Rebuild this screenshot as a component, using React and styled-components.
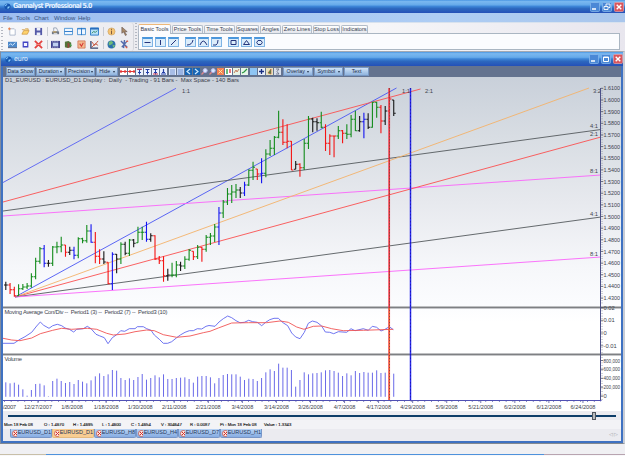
import styled, { createGlobalStyle } from 'styled-components'

const GlobalStyle = createGlobalStyle`
	* { box-sizing: border-box; }
	body {
		margin: 0;
		font-family: 'Liberation Sans', Arial, sans-serif;
		font-size: 6px;
		color: #30343c;
	}
`

const Screen = styled.div`
	width: 625px;
	height: 456px;
	display: flex;
	flex-direction: column;
	background: #ececf0;
	overflow: hidden;
	white-space: nowrap;
	user-select: none;
`

const TitleBar = styled.div`
	height: ${p => p.$h}px;
	flex: none;
	display: flex;
	align-items: center;
	gap: 2px;
	padding: 0 ${p => p.$right}px 0 4px;
	background: linear-gradient(#4a96e2 0, #7ab8f0 12%, #66aaea 38%, #3f88da 48%, #2d68be 66%, #2450b8 100%);
`

const TitleText = styled.span`
	flex: 1;
	color: #e6f2ff;
	font-family: 'DejaVu Sans Condensed', 'DejaVu Sans', sans-serif;
	font-stretch: condensed;
	font-size: ${p => p.$size}px;
	font-weight: ${p => (p.$bold ? 'bold' : 'normal')};
	letter-spacing: ${p => p.$track || 0}px;
	line-height: 1;
`

const MenuBar = styled.div`
	height: 10px;
	flex: none;
	display: flex;
	align-items: center;
	padding-left: 3px;
	border-bottom: 1px solid #d8e2ee;
	background: linear-gradient(90deg, #9dbdf0, #aecdf4 70%, #a9c6ec);
	color: #34507c;
`

const MenuItem = styled.span`
	width: ${p => p.$w}px;
`

const ToolArea = styled.div`
	height: 28px;
	flex: none;
	display: flex;
	background: linear-gradient(90deg, #f7f7f9, #ececf0 20%, #f6f6f8 60%, #e8e6ee);
`

const IconBars = styled.div`
	width: 134px;
	display: flex;
	flex-direction: column;
	padding: 2px 0 0 1px;
	border-right: 1px solid #d4d6dc;
	border-radius: 0 3px 3px 0;
`

const IconBar = styled.div`
	height: 13px;
	display: flex;
	align-items: center;
	gap: 4px;
`

const Grip = styled.div`
	width: 2px;
	height: ${p => p.$h}px;
	margin: 0 1px 0 ${p => p.$left || 0}px;
	background: repeating-linear-gradient(#b4b8c2 0 1px, transparent 1px 3px);
`

const Divider = styled.div`
	width: 1px;
	height: 9px;
	margin: 0 -0.5px;
	background: #c6cad2;
`

const ToolPanel = styled.div`
	flex: 1;
	display: flex;
	flex-direction: column;
	margin: 1px 5px 1px 0;
`

const TabStrip = styled.div`
	height: 9px;
	display: flex;
	align-items: flex-end;
	gap: 1px;
`

const ToolTab = styled.div`
	width: ${p => p.$w}px;
	height: ${p => (p.$active ? 10 : 8)}px;
	margin-bottom: ${p => (p.$active ? -1 : 0)}px;
	z-index: ${p => (p.$active ? 1 : 0)};
	flex: none;
	display: flex;
	align-items: center;
	justify-content: center;
	border: 1px solid #b3bcc8;
	border-bottom: 0;
	border-top-color: ${p => (p.$active ? '#eeb878' : '#b3bcc8')};
	border-radius: 2px 2px 0 0;
	background: ${p => (p.$active ? '#fcfcfe' : 'linear-gradient(#fff, #e4e6ec)')};
	color: #384252;
	font-size: 5.6px;
	line-height: 1;
`

const ToolRow = styled.div`
	flex: 1;
	display: flex;
	align-items: center;
	gap: 2px;
	padding-left: 3px;
	border: 1px solid #aab6c2;
	background: #fbfcfe;
`

const ToolButton = styled.div`
	width: 11px;
	height: 10px;
	margin-left: ${p => (p.$group ? 4 : 0)}px;
	border: 1px solid #7fb4e4;
	border-top: 2px solid #4b97dc;
	background: #dcedfb;
	display: flex;
`

const Child = styled.div`
	height: 393px;
	flex: none;
	display: flex;
	flex-direction: column;
	border-left: 1px solid #7f8ba0;
	border-right: 2px solid #c8cdd6;
	border-top: 1px solid #a2a8b2;
	border-bottom: 1px solid #838990;
`

const ChildBody = styled.div`
	flex: 1;
	display: flex;
	flex-direction: column;
	border: solid #3f72c2;
	border-width: 0 2px 2px;
	background: #ebebf0;
`

const ChartTools = styled.div`
	height: 11px;
	flex: none;
	display: flex;
	align-items: center;
	gap: 1px;
	padding-left: 3px;
	background: #64738f;
`

const ChartButton = styled.div`
	width: ${p => p.$w}px;
	height: 9px;
	flex: none;
	display: flex;
	align-items: center;
	justify-content: space-evenly;
	background: linear-gradient(#cfe2f6, #8fb4df);
	border: 1px solid #7898c4;
	color: #1c2c48;
	font-size: 5.3px;
	line-height: 1;
`

const Arrow = styled.i`
	border: 1.5px solid transparent;
	border-top: 2px solid #24344e;
	border-bottom: 0;
`

const MiniTools = styled.div`
	width: 163px;
	display: flex;
	align-items: center;
	justify-content: space-between;
	padding: 0 1px;
`

const ChartArea = styled.div`
	height: 334px;
	flex: none;
	display: flex;
	flex-direction: column;
	background: linear-gradient(#c9d0da 0, #d8dde3 60px, #e7e9ee 125px, #f6f7fa 190px, #fbfcfe 227px, #fff 245px, #fff 100%);
`

const InfoLine = styled.div`
	height: 10px;
	padding: 0 0 0 2px;
	line-height: 7px;
	font-size: 5.9px;
	color: #3c404a;
`

const Plot = styled.svg`
	flex: none;
	overflow: visible;
`

const Slider = styled.div`
	height: 9px;
	flex: none;
	display: flex;
	align-items: center;
	padding: 0 5px;
`

const Track = styled.div`
	flex: ${p => p.$grow};
	height: 2px;
	background: #0c3c68;
`

const Thumb = styled.div`
	width: 4px;
	height: 8px;
	background: #b7bbc0;
	border: 1px solid #50565e;
`

const Readout = styled.div`
	height: 9px;
	flex: none;
	display: flex;
	align-items: center;
	padding-left: 1px;
	font-size: 4.3px;
	color: #101010;
	background: #f3f3f6;
	-webkit-text-stroke: 0.12px #101010;
`

const ReadCell = styled.span`
	width: ${p => p.$w}px;
	flex: none;
`

const WindowTabs = styled.div`
	flex: 1;
	display: flex;
	align-items: flex-start;
	padding: 0 3px 0 7px;
`

const WindowTab = styled.div`
	width: 42px;
	height: 9px;
	display: flex;
	align-items: center;
	gap: 1px;
	padding-left: 1px;
	background: ${p => (p.$active ? '#f8cd92' : 'linear-gradient(#b8d3f5, #86ace2)')};
	border: 1px solid ${p => (p.$active ? '#e4ba80' : '#7896c8')};
	border-top: 0;
	border-radius: 0 0 2px 2px;
	color: #26375a;
	font-size: 5.5px;
	line-height: 1;
`

const Scrollers = styled.span`
	margin-left: auto;
	font-size: 5px;
	line-height: 10px;
	color: #9a9aa4;
`

const Footer = styled.div`
	flex: 1;
	display: flex;
	align-items: flex-end;
	background: #f0f0f3;
`

const FooterLine = styled.div`
	width: ${p => p.$w}px;
	height: 2px;
	background: ${p => p.$c};
	border-bottom: 1px solid #f8f8fa;
`

const Caption = ({ kind }) => (
	<svg width="10" height="10" viewBox="0 0 10 10" fill="none" stroke="#fff">
		<rect x=".5" y=".5" width="9" height="9" rx="1" fill={kind === 'close' ? '#d9565c' : '#4b88d6'} stroke={kind === 'close' ? '#e8a0a8' : '#8cbcee'} strokeWidth=".7" />
		{kind === 'min' && <path d="M2 7h4" strokeWidth="1.5" />}
		{kind === 'max' && <path d="M2.5 3h5v4.5h-5zM2.5 3.5h5" />}
		{kind === 'restore' && <path d="M4 4V2h4v3.5H6.5M2 4.5h4v3H2z" strokeWidth=".9" />}
		{kind === 'close' && <path d="M2.7 2.7l4.6 4.6m0-4.6L2.7 7.3" strokeWidth="1.4" />}
	</svg>
)

const Globe = ({ size }) => (
	<svg width={size} height={size} viewBox="0 0 8 8">
		<circle cx="4" cy="4" r="3.5" fill="#1556b0" />
		<path d="M1 4Q1 1 4 1Q3 3 1 4M4 4.3L6.6 3.6Q6.4 6.6 4 6.8z" fill="#8bd0ff" />
	</svg>
)

const glyphs = {
	new: <><path d="M2 2h5l1 1v6H2z" fill="#fff" stroke="#8a9ab8" strokeWidth=".7" /><path d="M0 2h3M1.5.5v3" stroke="#e87840" /></>,
	open: <><path d="M1 3h3l1-1h3v2" fill="#f6dc98" stroke="#cb9440" strokeWidth=".8" /><path d="M1 8l2-4h6L7 8z" fill="#ffd36b" stroke="#cb9440" strokeWidth=".8" /></>,
	save: <><path d="M1 1h8v8H1z" fill="#5359a7" /><path d="M3 1h4v3H3zM3 6h4v3H3z" fill="#edf0fa" /></>,
	print: <><path d="M3 1h3l2 4H3z" fill="#f4f6fa" stroke="#72829a" strokeWidth=".7" /><path d="M1 5h8v3H1z" fill="#6d7888" /><path d="M2 5.5h4" stroke="#e4b04c" /><path d="M3 7.5h4" stroke="#fff" /></>,
	tileH: <><path d="M.5 1.5h9v7h-9z" fill="#eef6ff" stroke="#4a92d4" /><path d="M.5 5h9" stroke="#2474c6" /></>,
	tileV: <><path d="M.5 1.5h9v7h-9z" fill="#eef6ff" stroke="#4a92d4" /><path d="M5 1v8M.5 2h9" stroke="#2474c6" /></>,
	cascade: <><path d="M.5 1h9v8h-9z" fill="#b6e0f7" stroke="#2474c6" /><path d="M.5 2h9" stroke="#1d62b6" strokeWidth="1.5" /><path d="M2 7l2-2 2 1 2-2" fill="none" stroke="#2c8460" /></>,
	info: <><circle cx="5" cy="5" r="4" fill="#f6c473" stroke="#c49a5b" strokeWidth=".6" /><path d="M5 4v4M5 2v1.2" stroke="#735035" /></>,
	pointer: <path d="M2 0v7l2-1.5 2 4 1.3-.7-2-3.6H8z" fill="#a78968" stroke="#4b3b38" strokeWidth=".5" />,
	chart: <><path d="M0 2h10v6H0z" fill="#4d89ca" /><path d="M1 6l2-2 2 2 3-3" fill="none" stroke="#e3f0ff" /><path d="M0 8.5h10" stroke="#3c537c" /></>,
	square: <path d="M2.5 2.5h5v5h-5z" fill="#f4f4ff" stroke="#4144c4" strokeWidth="1.4" />,
	cross: <><path d="M1 1l8 8M9 1L1 9" stroke="#e3413f" strokeWidth="2" /><path d="M2 5h6" stroke="#f28a80" /></>,
	film: <><path d="M0 1h10v8H0z" fill="#3f438f" /><path d="M2 3h6v4H2z" fill="#bfd0f0" /><path d="M1 2h8M1 8h8" stroke="#fff" strokeDasharray="1 1" strokeWidth=".7" /></>,
	door: <><path d="M1 2l4-1 3 2v5l-4 1-3-1z" fill="#54753b" /><path d="M4 3l2 1v4L4 9z" fill="#9c443d" /><path d="M7 4l2 2-2 1" fill="#4bae58" /></>,
	calendar: <><path d="M1 1h8v8H1z" fill="#f3bb91" stroke="#d06949" strokeWidth=".8" /><path d="M3 4l2 3 2-4" fill="none" stroke="#d63734" strokeWidth="1.2" /></>,
	graph: <><path d="M1 1v8h8" fill="none" stroke="#39476f" strokeWidth="1.5" /><path d="M2 2l3 4 4-5M2 8l4-4 3 2" fill="none" stroke="#c24d34" /></>,
	globe: <><circle cx="5" cy="5" r="4.4" fill="#2b70ad" /><path d="M2 2l3-1 2 2-2 2-3 1zM6 5l3 1-2 3z" fill="#71bb77" /></>,
	tools: <><path d="M1 1l7 7M8 1L2 8M5 0l-1 9" stroke="#536aab" strokeWidth="1.5" /><path d="M7 2l2-1M6 7l2 2" stroke="#df5d48" strokeWidth="1.4" /></>,
}

const Glyph = ({ name }) => <svg width="9" height="9" viewBox="0 0 10 10">{glyphs[name]}</svg>

const drawShapes = [
	'M1.5 3.5h6', 'M4.5 1v5', 'M2 6l5-5',
	'M1 6q5 0 6-5', 'M1 6q3-8 7 0', 'M1 6h3q2-1 2-5',
	'M2 1.5h5v4H2z', 'M4.5 1.5L7.5 5.5h-6z', 'M3 1.5h3L7.3 3.5 6 5.5H3L1.7 3.5z',
]

const toolTabs = [['Basic Tools', 33], ['Price Tools', 31], ['Time Tools', 31], ['Squares', 23], ['Angles', 21], ['Zero Lines', 30], ['Stop Loss', 27], ['Indicators', 27]]

const arrowUp = <path d="M1.5 1.5h4M3.5 1.5v5M2 4.5h3" stroke="#2440a8" strokeWidth="1" />
const bars = <path d="M1 2h5M1 4h5M1 6h5" stroke="#5c80ca" strokeWidth=".8" />
const lens = (
	<>
		<circle cx="4.2" cy="2.6" r="2" fill="#d7ecff" stroke="#b4b4ee" />
		<path d="M2.7 4.3L.5 6.5" stroke="#e0888c" strokeWidth="1.3" />
	</>
)
const miniIcons = [
	['#fff', <path d="M0 3.5h7M1 2v3M5 2v3" stroke="#e23535" strokeWidth="1.2" />],
	['#fff', <path d="M0 3.5h7M2 2v3M6 2v3" stroke="#e23535" strokeWidth="1.2" />],
	['#eaf1ff', <>{arrowUp}<path d="M1 1.2h5" stroke="#d03848" /></>],
	['#eaf1ff', arrowUp],
	['#eaf1ff', <>{arrowUp}<path d="M1 6h5" stroke="#d03848" /></>],
	['#eaf1ff', <path d="M3.5 1v3M2 4.5h3M1 6h5" stroke="#2440a8" strokeWidth="1.2" />],
	['#dbe6fa', bars],
	['#c3d5f4', bars],
	['#1764b4', <path d="M5 1L2 3.5 5 6" fill="none" stroke="#cceaff" strokeWidth="1.2" />],
	['#1764b4', <path d="M2 1l3 2.5L2 6" fill="none" stroke="#cceaff" strokeWidth="1.2" />],
	['none', lens],
	['none', lens],
	['#f48053', <path d="M1.5 1.5l4 4m0-4l-4 4" stroke="#fff0a8" strokeWidth=".9" />],
	['#fff', <><path d="M2 1v5" stroke="#209b35" strokeWidth="1.3" /><path d="M5 1v4" stroke="#dd3038" strokeWidth="1.3" /></>],
	['#e6f3e5', <path d="M1 5l2-3 1 2 2-3" fill="none" stroke="#c47e60" />],
	['#e5f6e8', <path d="M1 5l2-1 3-3" fill="none" stroke="#299840" strokeWidth="1.2" />],
	['#8ec5f4', null],
	['#e7eef9', <path d="M1 3.5h5M3.5 1v5" stroke="#182d80" strokeWidth="1.3" />],
	['#e8e2bc', <path d="M2 5l3-4v5z" fill="#399145" stroke="#bd4839" strokeWidth=".6" />],
	['#d7deeb', <path d="M2 1h3L3 3.5 5 6H2" fill="none" stroke="#60677c" strokeWidth=".8" />],
]

// one entry per session: colour, high, low, close
const prices = `k281.7,290,285 r283,294,289.7 r286.7,296.7,295.7 g284.3,296,288.7 g284,290,287 g283,289,286 g273.3,287.7,276.7 g257.7,279.3,261.3
g247,263.7,248.7 b245,267.3,263.3 k260,266.7,263.3 g246,266,247 g241.7,253.3,246.7 g236.7,252.3,245 r245,256.7,252.3 k246.7,255,250.3
b246.7,259.3,255.3 g237.3,258.3,238.7 g237.7,243.3,240.7 g225,242.7,231 b224.3,242.7,242.3 r232,263.3,256.3 r249.3,264,259 k251.3,264,262
r262.3,284.3,283.7 b252.3,290,254.3 k254,273.3,259 g242.3,264,244.3 k241.7,255.3,253.3 g239,256,240 k239,247.3,243.3 g226.7,242.7,232.3
g226.7,240,232.3 b221.7,241.7,239.3 k233.3,241.7,235.7 r235.3,260,259 r256,264,260.7 r256.3,281.7,275.7 k268.7,280.7,275 g262.7,277.3,275
g261,277.3,265 k261.7,271,266 g256.3,269,259.3 g249,260.7,250.3 r251.3,260,256.7 g245,259,247.3 r246.7,261.7,249.3 g235,251.7,237.3
g233,245,236 g224,242,227 b207,245,213 g200,218,202 g188,205,194 g185,203,192 g184,198,190 k187,198,193
b181.7,196,185 g169.3,186,170.3 g161.7,180,167.3 r169,180,174 b158.3,183.3,173.3 g149.3,177.3,154 g140,156,148.3 g136,155,137.3
g110.7,138.3,132.3 r119.3,145,142.3 r124.3,148.3,141.3 r141,170,170 k161,169.3,164.3 r163.3,176.7,167.7 g139,170,143.3 g116,149,119
k117.7,132.3,121.7 k118.3,130.7,122.7 g111.7,128.3,127.3 r124.3,151,143.3 r134.3,155,136 r135.7,157.3,136 g126,139,130.7 r130,143.3,133.3
g124.3,139,134.3 g115,137.3,119.3 g110.7,131,130.7 k116,131.7,121.7 b112.7,138.3,119.3 k113.3,129,127.3 g101.7,127.7,102.3 g101.7,117.7,107.3
r105,133.3,121 k106,125,111 r95,128,99 k100,116,113.3`
	.split(/\s+/)
	.map(s => [s[0], ...s.slice(1).split(',').map(Number)])

const volumeTops = [
	247, 250, 248, 254, 268, 287, 270, 252, 251, 256, 289, 243, 236, 243, 249, 246, 252, 240, 245, 250, 241, 229, 220, 228,
	223, 210, 212, 234, 240, 235, 240, 231, 222, 239, 234, 226, 232, 223, 237, 237, 234, 233, 232, 237, 248, 230, 228, 228,
	232, 250, 234, 225, 222, 223, 223, 230, 240, 236, 237, 243, 234, 217, 208, 213, 191, 203, 203, 210, 260, 240, 217, 223,
	220, 219, 217, 211, 210, 213, 218, 228, 220, 226, 213, 219, 216, 218, 218, 211, 219, 218, 216, 221,
]

const colors = { k: '#161616', r: '#f41414', g: '#138c1c', b: '#1414f0' }
const barX = i => 5.8 + i * 4.263

const gannLines = [
	['#5660f4', 3, 182.5, 176, 88.3], ['#4a56f4', 15, 297, 396.5, 88],
	['#fa5050', 3, 202, 420.5, 89], ['#555a5e', 3, 211, 601, 129.5],
	['#fb64fb', 3, 216, 601, 175], ['#fa5050', 15, 297, 601, 137],
	['#f4b26a', 15, 297, 589, 88], ['#555a5e', 15, 297, 601, 217],
	['#fb64fb', 15, 297, 601, 257],
]

const gannLabels = [['1:1', 182, 93], ['1:1', 402, 93], ['2:1', 425, 93], ['3:2', 593, 93], ['4:1', 590, 128], ['2:1', 590, 136], ['8:1', 590, 173], ['4:1', 590, 215.5], ['8:1', 590, 255.5]]

const dates = ['12/27/2007', '1/8/2008', '1/18/2008', '1/30/2008', '2/11/2008', '2/21/2008', '3/4/2008', '3/14/2008', '3/26/2008', '4/7/2008', '4/17/2008', '4/29/2008', '5/9/2008', '5/21/2008', '6/2/2008', '6/12/2008', '6/24/2008']

const axisLabels = [
	...Array.from({ length: 19 }, (_, i) => [(1.61 - i * 0.01).toFixed(4), 88.3 + i * 11.65]),
	['0.02', 307.6], ['0.01', 320.3], ['0', 333], ['-0.01', 345.8],
	['800,000', 360.5], ['600,000', 369.3], ['400,000', 378.3], ['200,000', 387.2], ['0', 396],
]

const macd = '3,343.3 14,343.3 20,339.3 25,336.7 31.7,332.3 36.7,326 40.3,322 43.7,325.3 49,328.3 52.7,325.7 57.3,324.3 61.7,325.7 65,328 69.3,329.3 73.7,332 76.7,329.3 83.3,328.7 87.3,326.3 91,328.7 96,334.3 99.3,335.7 104.3,337.7 108,343.7 112.3,337.7 116.7,334.7 120.7,330.7 124.7,331.3 129.3,328.7 135,328.7 137.3,326.7 143.3,326.7 146.7,328.7 151,330.3 154.3,335 159.3,339.3 163.3,343.3 167.7,343.3 171.7,341.7 176.7,337.7 180.3,335 185,332.3 189.3,330.7 193.3,330.7 197.3,328.7 201.7,329 206,326.3 209,325.5 215,326.3 219,322 223.3,318.7 227.7,316 231.7,317.7 236,320.7 240,322.7 244.3,322.3 248.7,320.3 252.7,321.7 257.3,322.3 261.7,325.7 265.7,322.3 269.7,319.7 274,318.3 278.3,318.3 283,322.7 287.7,325.7 291.7,333 295.7,337 300,338.7 304.3,332.3 308.3,323.3 312.3,321 317,322.3 321.7,326 325.3,332 329.7,332.3 333.7,333.7 338.3,331.7 346.7,332.3 351,328.7 355,330.7 363.3,328.7 368.3,330.3 372.3,326.3 376.7,327.3 381,331 385,329.3 389.3,326.7 393.3,329.7'
const signal = '3,338.3 11.7,340 20,340.7 31.7,338 40.3,333.7 52.7,330.3 61.7,328.3 71.7,329.3 87.3,328.3 96.7,329.3 106.7,333.3 113.3,335 125,334 135,331.7 146.7,330 154.3,330.7 163.3,334.7 176.7,337.3 190,336 203.3,332.7 210,331.3 218.3,328 231.7,323 248.3,322.7 266.7,322.7 280,321 288.3,322.3 296.7,327 304,329.3 313.3,326.3 321.7,326 331.7,328.7 343.3,330.7 363.3,330.3 393.3,329.3'

const Chart = () => (
	<Plot width="618" height="324" viewBox="3 87 618 324" fontSize="5.8" fill="#40444e">
		<g fill="none" strokeWidth=".9">
			{gannLines.map(([c, x1, y1, x2, y2], i) => <line key={i} x1={x1} y1={y1} x2={x2} y2={y2} stroke={c} />)}
		</g>
		{gannLabels.map(([t, x, y], i) => <text key={i} x={x} y={y}>{t}</text>)}

		{prices.map(([c, high, low, close], i) => {
			const x = barX(i)
			const open = i ? Math.min(low, Math.max(high, prices[i - 1][3])) : close
			return <path key={i} d={`M${x} ${high}V${low}M${x} ${close}h2M${x} ${open}h-1.8`} stroke={colors[c]} strokeWidth="1.1" fill="none" />
		})}

		<path d="M3 307.2H621M3 354.2H621" stroke="#aaacae" strokeWidth="2" />
		<path d="M3 307.8H621M3 354.8H621" stroke="#5c5e62" strokeWidth=".8" />

		<text x="4.5" y="313.5" textLength="163" xmlSpace="preserve">Moving Average Con/Div --  Period1 (3) --  Period2 (7) --  Period3 (10)</text>
		<polyline points={macd} fill="none" stroke="#6066ee" strokeWidth=".9" />
		<polyline points={signal} fill="none" stroke="#f05454" strokeWidth=".9" />

		<text x="4.5" y="360.5" textLength="17.5">Volume</text>
		{volumeTops.map((y, i) => <path key={i} d={`M${barX(i)} ${300 + y / 3}V396.8`} stroke="#6a6ae8" />)}

		<path d="M3 400.5H601.5" stroke="#5050b4" />
		<path d="M600.5 88V400" stroke="#4c5088" />
		<path d="M602 88.3V304" stroke="#686c80" strokeDasharray=".6 1.73" />
		<path d="M602 308V400" stroke="#686c80" strokeDasharray=".6 2" />
		<path d="M4 401.5H601" stroke="#6c70b0" strokeDasharray=".8 5.98" />
		{axisLabels.map(([t, y], i) => (
			<g key={i}>
				<path d={`M601 ${y}h2.3`} stroke="#4c5060" strokeWidth=".7" />
				<text x="603.5" y={y + 2.1} textLength={t.length > 5 ? 16.6 : undefined} lengthAdjust="spacingAndGlyphs">{t}</text>
			</g>
		))}

		<path d="M389.2 88V400" stroke="#f02c3c" strokeWidth="1.7" />
		<path d="M389.5 88V400" stroke="#8c4438" strokeWidth=".9" strokeDasharray="1.5 1.5" />
		<path d="M389.2 308V400" stroke="#f47830" strokeWidth="1" strokeDasharray="2 1" />
		<path d="M410.5 88V400" stroke="#2828f0" strokeWidth="1.5" />
		<path d="M410.5 88V400" stroke="#1414a0" strokeWidth=".7" strokeDasharray="1.5 2" />

		<text x="3" y="409" textLength="13">/2007</text>
		{dates.map((d, i) => (
			<g key={d}>
				<path d={`M${38 + i * 34.06} 401v2`} stroke="#50549c" strokeWidth=".8" />
				<text x={38 + i * 34.06} y="409" fontSize="5.6" textAnchor="middle">{d}</text>
			</g>
		))}
	</Plot>
)

const App = () => (
	<>
		<GlobalStyle />
		<Screen>
			<TitleBar $h={13} $right={1}>
				<Globe size={7} />
				<TitleText $size={7} $bold $track={-0.63}>Gannalyst Professional 5.0</TitleText>
				<Caption kind="min" />
				<Caption kind="restore" />
				<Caption kind="close" />
			</TitleBar>
			<MenuBar>
				<MenuItem $w={13}>File</MenuItem>
				<MenuItem $w={18}>Tools</MenuItem>
				<MenuItem $w={20}>Chart</MenuItem>
				<MenuItem $w={24}>Window</MenuItem>
				<MenuItem $w={14}>Help</MenuItem>
			</MenuBar>
			<ToolArea>
				<IconBars>
					<IconBar>
						<Grip $h={10} />
						{['new', 'open', 'save'].map(n => <Glyph key={n} name={n} />)}
						<Divider />
						{['print', 'tileH', 'tileV', 'cascade'].map(n => <Glyph key={n} name={n} />)}
						<Divider />
						{['info', 'pointer'].map(n => <Glyph key={n} name={n} />)}
					</IconBar>
					<IconBar>
						<Grip $h={10} />
						{['chart', 'square', 'cross'].map(n => <Glyph key={n} name={n} />)}
						<Divider />
						{['film', 'door', 'calendar', 'graph'].map(n => <Glyph key={n} name={n} />)}
						<Divider />
						{['globe', 'tools'].map(n => <Glyph key={n} name={n} />)}
					</IconBar>
				</IconBars>
				<Grip $h={26} $left={1} />
				<ToolPanel>
					<TabStrip>
						{toolTabs.map(([label, w], i) => <ToolTab key={label} $w={w} $active={i === 0}>{label}</ToolTab>)}
					</TabStrip>
					<ToolRow>
						{drawShapes.map((d, i) => (
							<ToolButton key={d} $group={i === 3 || i === 6}>
								<svg width="9" height="7" fill="none" stroke="#25357c" strokeWidth="1"><path d={d} /></svg>
							</ToolButton>
						))}
					</ToolRow>
				</ToolPanel>
			</ToolArea>
			<Child>
				<TitleBar $h={14} $right={0}>
					<Globe size={7} />
					<TitleText $size={7} $track={-0.1}>euro</TitleText>
					<Caption kind="min" />
					<Caption kind="max" />
					<Caption kind="close" />
				</TitleBar>
				<ChildBody>
					<ChartTools>
						<ChartButton $w={29}>Data Show</ChartButton>
						<ChartButton $w={29}>Duration<Arrow /></ChartButton>
						<ChartButton $w={29}>Precision<Arrow /></ChartButton>
						<ChartButton $w={22}>Hide<Arrow /></ChartButton>
						<MiniTools>
							{miniIcons.map(([bg, shape], i) => (
								<svg key={i} width="7" height="7"><rect width="7" height="7" fill={bg} />{shape}</svg>
							))}
						</MiniTools>
						<ChartButton $w={30}>Overlay<Arrow /></ChartButton>
						<ChartButton $w={29}>Symbol<Arrow /></ChartButton>
						<ChartButton $w={25}>Text</ChartButton>
					</ChartTools>
					<ChartArea>
						<InfoLine>D1_EURUSD : EURUSD_D1 Display :&nbsp; Daily&nbsp; - Trading - 91 Bars -&nbsp; Max Space - 140 Bars</InfoLine>
						<Chart />
					</ChartArea>
					<Slider>
						<Track $grow={574} />
						<Thumb />
						<Track $grow={20} />
					</Slider>
					<Readout>
						<ReadCell $w={40}>Mon 18 Feb 08</ReadCell>
						<ReadCell $w={29}>O : 1.4670</ReadCell>
						<ReadCell $w={29}>H : 1.4695</ReadCell>
						<ReadCell $w={29}>L : 1.4600</ReadCell>
						<ReadCell $w={30}>C : 1.4654</ReadCell>
						<ReadCell $w={29}>V : 304647</ReadCell>
						<ReadCell $w={30}>R : 0.0087</ReadCell>
						<ReadCell $w={44}>Pt : Mon 18 Feb 08</ReadCell>
						<ReadCell $w={30}>Value : 1.3343</ReadCell>
					</Readout>
					<WindowTabs>
						{['D1', 'D1', 'H8', 'H4', 'D7', 'H1'].map((t, i) => (
							<WindowTab key={i} $active={i === 1}>
								<svg width="7" height="7"><circle cx="3.5" cy="3.5" r="3" fill="#fbe9e0" stroke="#c64a40" strokeWidth=".8" /><path d="M2 2l3 3m0-3L2 5" stroke="#d22e2e" /></svg>
								EURUSD_{t}
							</WindowTab>
						))}
						<Scrollers>◁ ▷</Scrollers>
					</WindowTabs>
				</ChildBody>
			</Child>
			<Footer>
				<FooterLine $w={46} $c="#c8bfa8" />
				<FooterLine $w={498} $c="#4e92dc" />
				<FooterLine $w={81} $c="#b8a4b0" />
			</Footer>
		</Screen>
	</>
)

export default App
